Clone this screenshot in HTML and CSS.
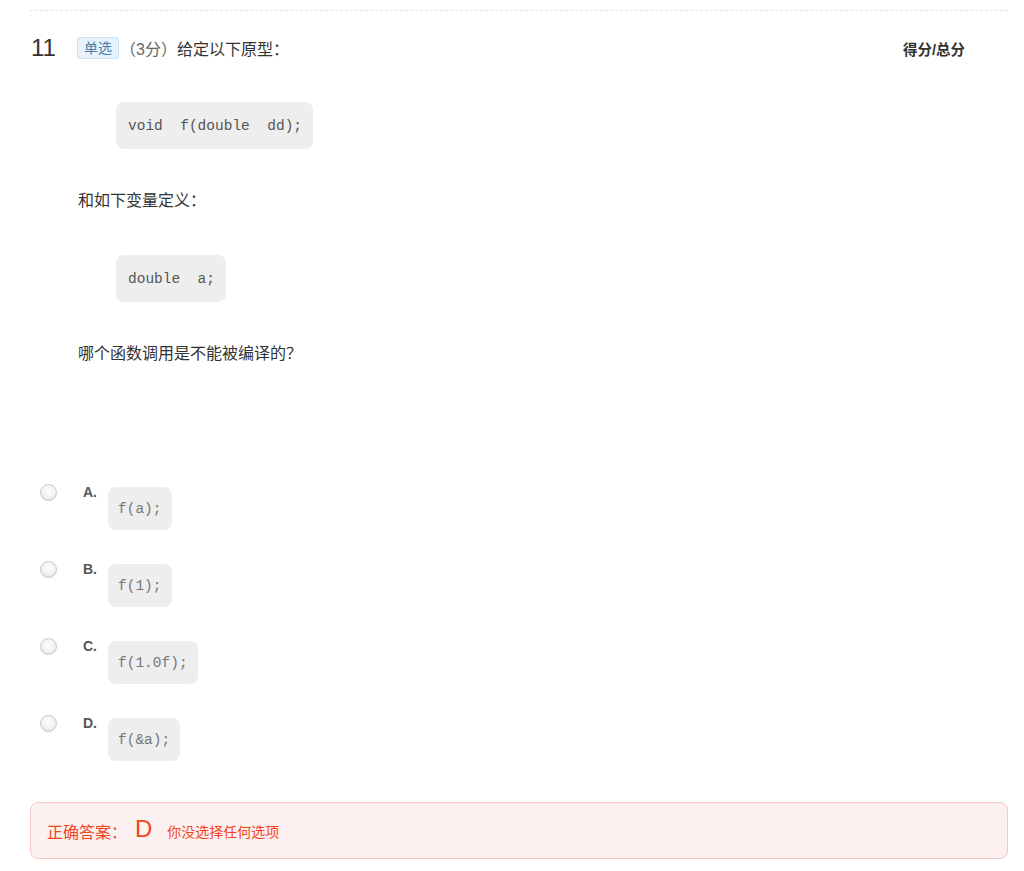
FILE: index.html
```html
<!DOCTYPE html>
<html lang="zh-CN">
<head>
<meta charset="utf-8">
<title>单选题</title>
<link rel="stylesheet" href="styles.css">
</head>
<body>
<div class="question">
  <div class="head">
    <span class="num">11</span>
    <span class="tag">单选</span>
    <span class="score">（3分）</span>
    <span class="title">给定以下原型：</span>
    <span class="total">得分/总分</span>
  </div>
  <div class="stem">
    <pre class="code">void  f(double  dd);</pre>
    <p class="para">和如下变量定义：</p>
    <pre class="code">double  a;</pre>
    <p class="para">哪个函数调用是不能被编译的？</p>
  </div>
  <ul class="options">
    <li class="opt"><span class="radio"></span><span class="label">A.</span><span class="ocode">f(a);</span></li>
    <li class="opt"><span class="radio"></span><span class="label">B.</span><span class="ocode">f(1);</span></li>
    <li class="opt"><span class="radio"></span><span class="label">C.</span><span class="ocode">f(1.0f);</span></li>
    <li class="opt"><span class="radio"></span><span class="label">D.</span><span class="ocode">f(&amp;a);</span></li>
  </ul>
  <div class="answer">
    <span class="ans-label">正确答案：</span><span class="ans-key">D</span><span class="ans-note">你没选择任何选项</span>
  </div>
</div>
</body>
</html>
```
FILE: styles.css
```css
html, body {
  margin: 0;
  padding: 0;
  background: #fff;
}
body {
  font-family: "Liberation Sans", "Noto Sans CJK SC", sans-serif;
  color: #333;
}
.question {
  margin: 10px 16px 0 30px;
  border-top: 1px dashed #e2e2e2;
}
.head {
  display: flex;
  align-items: center;
  height: 24px;
  margin-top: 25px;
  font-size: 16px;
}
.num {
  width: 47px;
  font-size: 24px;
  line-height: 24px;
  color: #333;
  padding-left: 1px;
  box-sizing: border-box;
}
.tag {
  font-size: 14px;
  line-height: 20px;
  padding: 0 6px;
  background: #e6f3fc;
  border: 1px solid #c5e2f6;
  color: #4a7ea8;
  border-radius: 2px;
}
.score {
  margin-left: 1px;
  color: #666;
}
.title {
  margin-left: 0;
  color: #333;
}
.total {
  margin-left: auto;
  margin-right: 43px;
  font-size: 14.5px;
  font-weight: bold;
  color: #333;
}
.stem {
  margin-left: 48px;
}
.code {
  display: inline-block;
  margin: 42px 0 0 38px;
  padding: 16px 11px 14px 12px;
  background: #eee;
  border-radius: 8px;
  font-family: "Liberation Mono", monospace;
  font-size: 14.5px;
  line-height: 17px;
  color: #555;
}
.para {
  margin: 40px 0 0 0;
  font-size: 16px;
  line-height: 24px;
  color: #333;
}
.options {
  list-style: none;
  margin: 118px 0 0 0;
  padding: 0 0 0 10px;
}
.opt {
  display: flex;
  align-items: flex-start;
  height: 77px;
}
.radio {
  width: 15px;
  height: 15px;
  border-radius: 50%;
  border: 1px solid #c8c8c8;
  background: radial-gradient(circle at 50% 40%, #fdfdfd 0%, #f1f1f1 60%, #e2e2e2 100%);
  box-shadow: inset 0 -1px 1px rgba(0,0,0,0.06);
}
.label {
  width: 25px;
  margin-left: 26px;
  font-size: 14px;
  font-weight: bold;
  line-height: 17px;
  color: #555;
}
.ocode {
  margin-top: 3px;
  padding: 14px 10px 12px;
  background: #eee;
  border-radius: 8px;
  font-family: "Liberation Mono", monospace;
  font-size: 14.5px;
  line-height: 17px;
  color: #777;
}
.answer {
  display: flex;
  align-items: center;
  height: 55px;
  margin-top: 10px;
  padding-left: 16px;
  background: #fdf0f0;
  border: 1px solid #f7c6c6;
  border-radius: 8px;
  color: #f2471c;
}
.ans-label {
  font-size: 16px;
}
.ans-key {
  margin-left: 8px;
  font-size: 24px;
  line-height: 24px;
  margin-top: -4px;
}
.ans-note {
  margin-left: 15px;
  font-size: 14px;
}
```
